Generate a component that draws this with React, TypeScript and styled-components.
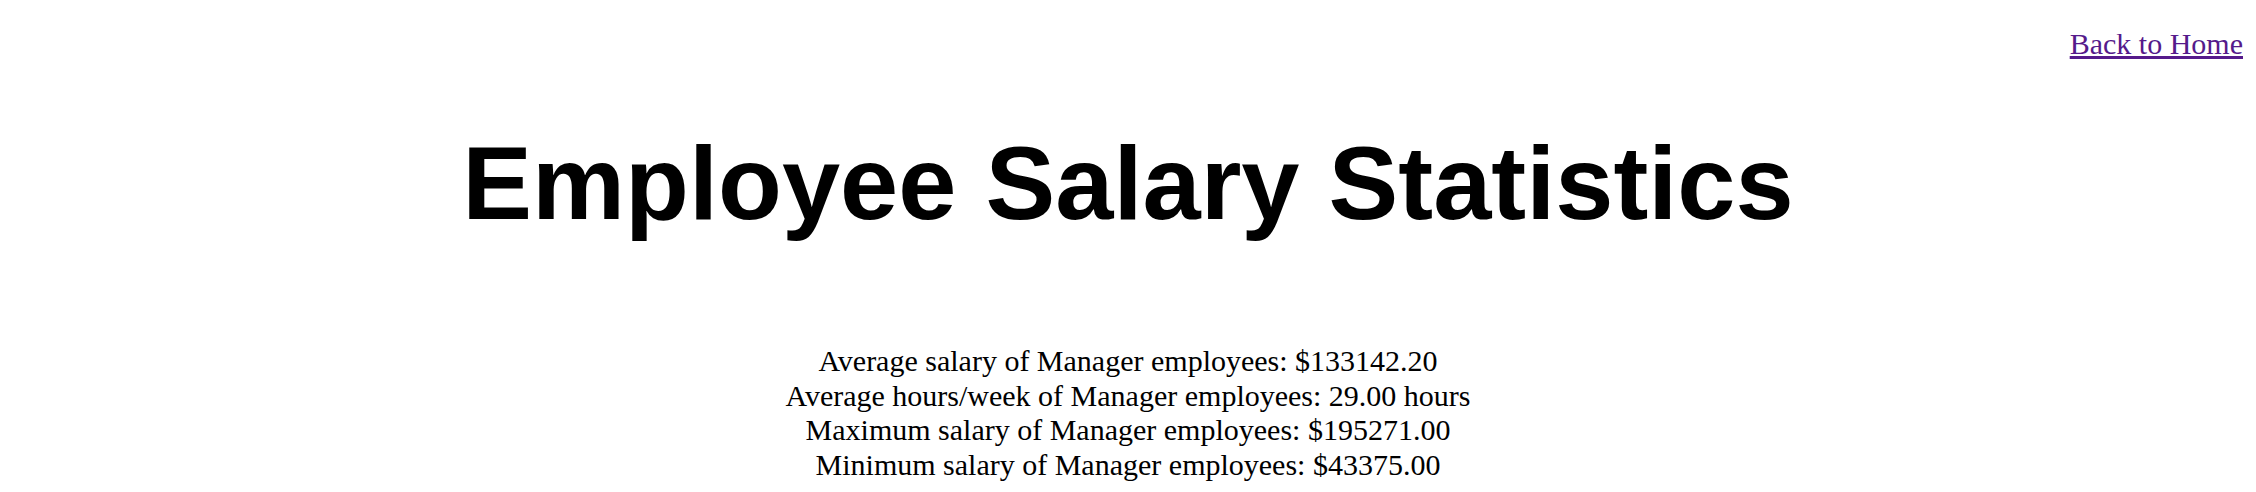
import React from "react";
import styled, { createGlobalStyle } from "styled-components";

const Global = createGlobalStyle`
  html, body { margin: 0; padding: 0; background: #ffffff; }
  body { font-family: "Liberation Serif", "Times New Roman", serif; color: #000; }
`;

const Page = styled.div`
  display: flex;
  flex-direction: column;
`;

const Nav = styled.nav`
  display: flex;
  justify-content: flex-end;
  padding: 27px 13px 0 0;
`;

const HomeLink = styled.a`
  font-family: "Liberation Serif", "Times New Roman", serif;
  font-size: 30px;
  line-height: 34.5px;
  color: #551a8b;
  text-decoration: underline;
`;

const Title = styled.h1`
  margin: 61px 0 0;
  text-align: center;
  font-family: "Liberation Sans", Arial, sans-serif;
  font-weight: 700;
  font-size: 104.6px;
  line-height: 120.6px;
`;

const Stats = styled.div`
  margin-top: 101px;
  display: flex;
  flex-direction: column;
  align-items: center;
`;

const StatLine = styled.div`
  font-size: 30px;
  line-height: 34.5px;
  text-align: center;
`;

const stats = [
  "Average salary of Manager employees: $133142.20",
  "Average hours/week of Manager employees: 29.00 hours",
  "Maximum salary of Manager employees: $195271.00",
  "Minimum salary of Manager employees: $43375.00",
];

export default function App() {
  return (
    <>
      <Global />
      <Page>
        <Nav>
          <HomeLink href="#">Back to Home</HomeLink>
        </Nav>
        <Title>Employee Salary Statistics</Title>
        <Stats>
          {stats.map((s) => (
            <StatLine key={s}>{s}</StatLine>
          ))}
        </Stats>
      </Page>
    </>
  );
}
